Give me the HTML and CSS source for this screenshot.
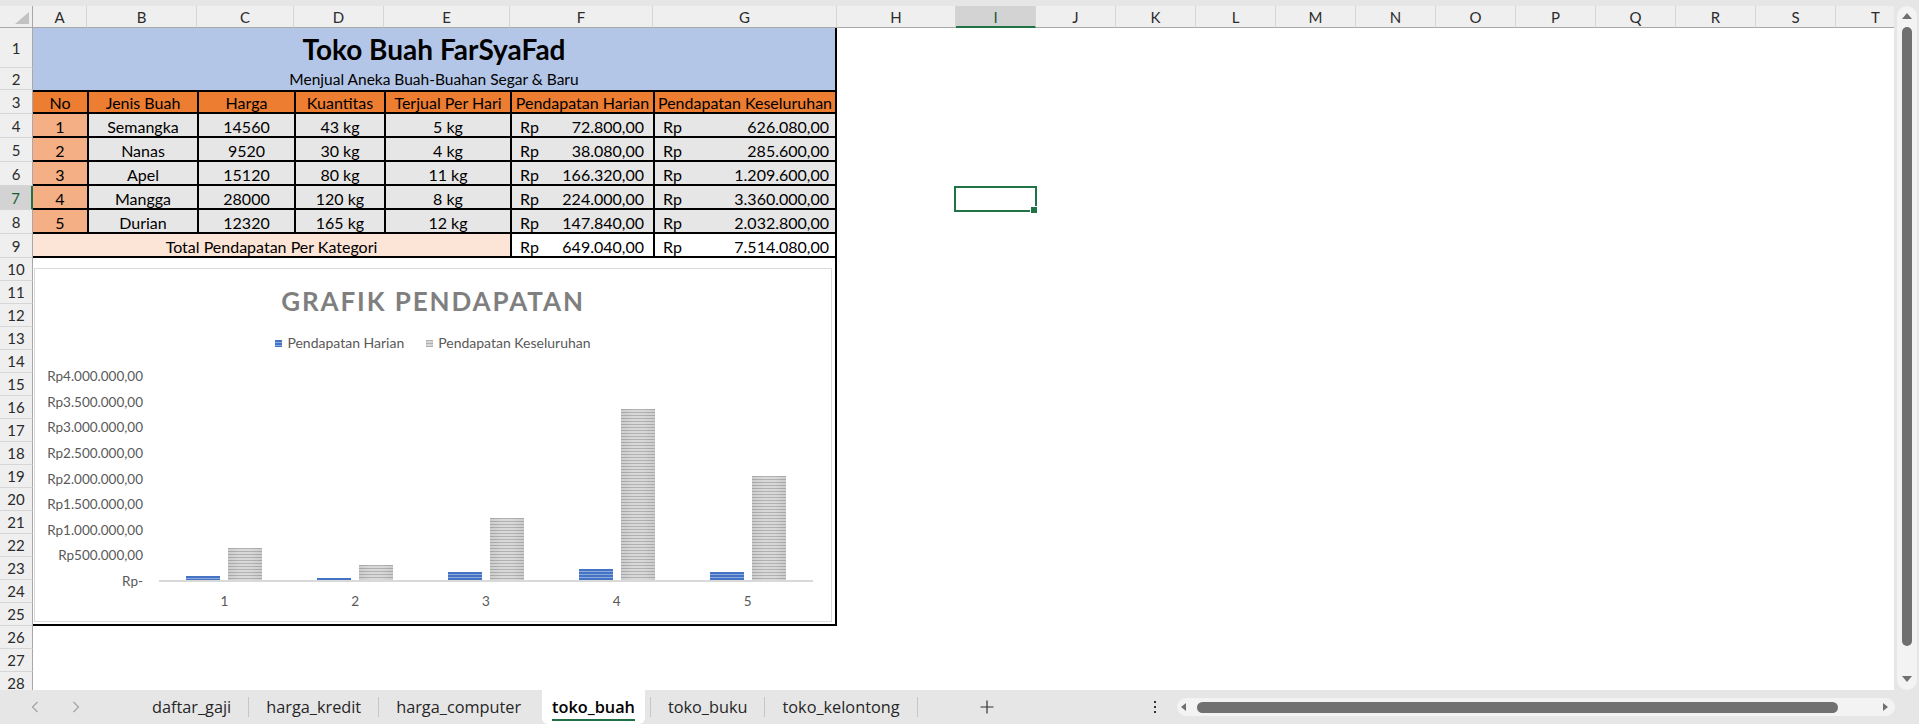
FILE: index.html
```html
<!DOCTYPE html>
<html lang="id">
<head>
<meta charset="utf-8">
<title>toko_buah</title>
<link rel="stylesheet" href="styles.css">
</head>
<body>
<div class="app">
  <div class="topstrip"></div>
  <div class="main">
    <div class="sheet">
      <div class="corner"><span class="tri"></span></div>
      <div class="ch">A</div><div class="ch">B</div><div class="ch">C</div><div class="ch">D</div><div class="ch">E</div><div class="ch">F</div><div class="ch">G</div><div class="ch">H</div><div class="ch on">I</div><div class="ch">J</div><div class="ch">K</div><div class="ch">L</div><div class="ch">M</div><div class="ch">N</div><div class="ch">O</div><div class="ch">P</div><div class="ch">Q</div><div class="ch">R</div><div class="ch">S</div><div class="ch">T</div>

      <div class="rh">1</div><div class="rh">2</div><div class="rh">3</div><div class="rh">4</div><div class="rh">5</div><div class="rh">6</div><div class="rh on">7</div><div class="rh">8</div><div class="rh">9</div><div class="rh">10</div><div class="rh">11</div><div class="rh">12</div><div class="rh">13</div><div class="rh">14</div><div class="rh">15</div><div class="rh">16</div><div class="rh">17</div><div class="rh">18</div><div class="rh">19</div><div class="rh">20</div><div class="rh">21</div><div class="rh">22</div><div class="rh">23</div><div class="rh">24</div><div class="rh">25</div><div class="rh">26</div><div class="rh">27</div><div class="rh">28</div>

      <div class="tbl">
        <div class="title">Toko Buah FarSyaFad</div>
        <div class="sub">Menjual Aneka Buah-Buahan Segar &amp; Baru</div>

        <div class="c hd first">No</div>
        <div class="c hd">Jenis Buah</div>
        <div class="c hd">Harga</div>
        <div class="c hd">Kuantitas</div>
        <div class="c hd">Terjual Per Hari</div>
        <div class="c hd">Pendapatan Harian</div>
        <div class="c hd">Pendapatan Keseluruhan</div>

        <div class="c no first">1</div><div class="c">Semangka</div><div class="c">14560</div><div class="c">43 kg</div><div class="c">5 kg</div><div class="c rp"><span>Rp</span><span>72.800,00</span></div><div class="c rp g"><span>Rp</span><span>626.080,00</span></div>
        <div class="c no first">2</div><div class="c">Nanas</div><div class="c">9520</div><div class="c">30 kg</div><div class="c">4 kg</div><div class="c rp"><span>Rp</span><span>38.080,00</span></div><div class="c rp g"><span>Rp</span><span>285.600,00</span></div>
        <div class="c no first">3</div><div class="c">Apel</div><div class="c">15120</div><div class="c">80 kg</div><div class="c">11 kg</div><div class="c rp"><span>Rp</span><span>166.320,00</span></div><div class="c rp g"><span>Rp</span><span>1.209.600,00</span></div>
        <div class="c no first">4</div><div class="c">Mangga</div><div class="c">28000</div><div class="c">120 kg</div><div class="c">8 kg</div><div class="c rp"><span>Rp</span><span>224.000,00</span></div><div class="c rp g"><span>Rp</span><span>3.360.000,00</span></div>
        <div class="c no first">5</div><div class="c">Durian</div><div class="c">12320</div><div class="c">165 kg</div><div class="c">12 kg</div><div class="c rp"><span>Rp</span><span>147.840,00</span></div><div class="c rp g"><span>Rp</span><span>2.032.800,00</span></div>

        <div class="c tot first">Total Pendapatan Per Kategori</div>
        <div class="c rp white"><span>Rp</span><span>649.040,00</span></div>
        <div class="c rp g white"><span>Rp</span><span>7.514.080,00</span></div>

        <div class="chartcell">
          <div class="chart">
            <div class="ctitle">GRAFIK PENDAPATAN</div>
            <div class="legend">
              <span class="lg"><i class="mk blue"></i>Pendapatan Harian</span>
              <span class="lg"><i class="mk gray"></i>Pendapatan Keseluruhan</span>
            </div>
            <div class="plotwrap">
              <div class="yaxis">
                <span>Rp4.000.000,00</span>
                <span>Rp3.500.000,00</span>
                <span>Rp3.000.000,00</span>
                <span>Rp2.500.000,00</span>
                <span>Rp2.000.000,00</span>
                <span>Rp1.500.000,00</span>
                <span>Rp1.000.000,00</span>
                <span>Rp500.000,00</span>
                <span>Rp-</span>
              </div>
              <div class="plotcol">
                <div class="plot">
                  <div class="cat"><i class="bar blue" style="height:1.82%"></i><i class="bar gray" style="height:15.652%"></i></div>
                  <div class="cat"><i class="bar blue" style="height:0.952%"></i><i class="bar gray" style="height:7.14%"></i></div>
                  <div class="cat"><i class="bar blue" style="height:4.158%"></i><i class="bar gray" style="height:30.24%"></i></div>
                  <div class="cat"><i class="bar blue" style="height:5.6%"></i><i class="bar gray" style="height:84%"></i></div>
                  <div class="cat"><i class="bar blue" style="height:3.696%"></i><i class="bar gray" style="height:50.82%"></i></div>
                </div>
                <div class="xaxis"><span>1</span><span>2</span><span>3</span><span>4</span><span>5</span></div>
              </div>
            </div>
          </div>
        </div>
      </div>

      <div class="selcell"><span class="handle"></span></div>
    </div>
    <div class="vscroll">
      <div class="vtrack">
        <span class="arr up"></span>
        <span class="vthumb"></span>
        <span class="arr down"></span>
      </div>
    </div>
  </div>
  <div class="tabbar">
    <div class="nav">
      <svg width="8" height="12" viewBox="0 0 8 12"><path d="M6.5 1 L1.5 6 L6.5 11" fill="none" stroke="#a3a3a3" stroke-width="1.2"/></svg>
      <svg width="8" height="12" viewBox="0 0 8 12"><path d="M1.5 1 L6.5 6 L1.5 11" fill="none" stroke="#a3a3a3" stroke-width="1.2"/></svg>
    </div>
    <div class="tabs">
      <span class="tab">daftar_gaji</span><i class="sep"></i>
      <span class="tab">harga_kredit</span><i class="sep"></i>
      <span class="tab">harga_computer</span>
      <span class="tab active">toko_buah</span><i class="sep"></i>
      <span class="tab">toko_buku</span><i class="sep"></i>
      <span class="tab">toko_kelontong</span><i class="sep"></i>
    </div>
    <span class="add"><svg width="14" height="14" viewBox="0 0 14 14"><path d="M7 0.5 V13.5 M0.5 7 H13.5" stroke="#333" stroke-width="1.2"/></svg></span>
    <span class="kebab"><svg width="4" height="14" viewBox="0 0 4 14"><rect x="1" y="1" width="2" height="2" fill="#333"/><rect x="1" y="6" width="2" height="2" fill="#333"/><rect x="1" y="11" width="2" height="2" fill="#333"/></svg></span>
    <div class="hscroll">
      <span class="harr left"></span>
      <span class="hthumb"></span>
      <span class="harr right"></span>
    </div>
  </div>
</div>
</body>
</html>
```

FILE: styles.css
```css
* { box-sizing: border-box; }
html, body { margin: 0; padding: 0; }
body {
  width: 1919px;
  height: 724px;
  overflow: hidden;
  background: #e6e6e6;
  font-family: Lato, "Noto Sans", sans-serif;
  color: #000;
}
.app { display: flex; flex-direction: column; height: 724px; }
.topstrip { height: 6px; flex: none; }
.main { display: flex; height: 684px; flex: none; }

/* ---------- sheet grid ---------- */
.sheet {
  flex: 1;
  min-width: 0;
  overflow: hidden;
  background: #fff;
  display: grid;
  grid-template-columns: 33px 54px 110px 97px 90px 126px 143px 184px 119px repeat(12, 80px);
  grid-template-rows: 22px 40px 22px repeat(7, 24px) repeat(19, 23px);
}
.corner {
  background: #efefef;
  border-right: 1px solid #a8a8a8;
  border-bottom: 1px solid #a8a8a8;
  display: flex;
  align-items: flex-end;
  justify-content: flex-end;
  padding: 0 3px 3px 0;
}
.tri {
  width: 14px;
  height: 12px;
  background: #c2c2c2;
  clip-path: polygon(100% 0, 100% 100%, 0 100%);
}
.ch {
  background: #efefef;
  border-right: 1px solid #d6d6d6;
  border-bottom: 1px solid #a8a8a8;
  display: flex;
  align-items: center;
  justify-content: center;
  font-size: 15px;
  color: #2b2b2b;
  padding-top: 1px;
}
.ch.on {
  background: #d3d3d3;
  border-bottom: 2px solid #217346;
  color: #185c37;
}
.rh {
  grid-column: 1;
  background: #efefef;
  border-right: 1px solid #a8a8a8;
  border-bottom: 1px solid #d6d6d6;
  display: flex;
  align-items: center;
  justify-content: center;
  font-size: 15px;
  color: #2b2b2b;
}
.rh.on {
  background: #d3d3d3;
  border-right: 2px solid #217346;
  color: #185c37;
}

/* ---------- table block ---------- */
.tbl {
  grid-column: 2 / 9;
  grid-row: 2 / 27;
  display: grid;
  grid-template-columns: 54px 110px 97px 90px 126px 143px 182px;
  grid-template-rows: 40px 22px repeat(7, 24px) repeat(16, 23px);
  border-right: 2px solid #000;
  font-size: 16px;
}
.title {
  grid-column: 1 / -1;
  background: #b4c6e7;
  font-weight: 700;
  font-size: 28px;
  display: flex;
  align-items: center;
  justify-content: center;
  padding-top: 1px;
}
.sub {
  grid-column: 1 / -1;
  background: #b4c6e7;
  display: flex;
  align-items: center;
  justify-content: center;
  font-size: 15.5px;
}
.c {
  display: flex;
  align-items: center;
  justify-content: center;
  background: #e7e6e6;
  border-left: 2px solid #000;
  border-bottom: 2px solid #000;
  white-space: nowrap;
  padding-top: 2px;
}
.c.first { border-left: 0; }
.c.hd { background: #ed7d31; border-top: 2px solid #000; padding-top: 0; }
.c.no { background: #f4b084; }
.c.rp { justify-content: space-between; padding-left: 8px; padding-right: 9px; }
.c.rp.g { padding-right: 6px; }
.c.tot { grid-column: 1 / 6; background: #fce4d6; }
.c.white { background: #fff; }

/* ---------- chart ---------- */
.chartcell {
  grid-column: 1 / -1;
  grid-row: 10 / 26;
  border-bottom: 2px solid #000;
  padding: 10px 3px 2px 1px;
  background: #fff;
}
.chart {
  height: 100%;
  border: 1px solid #d9d9d9;
  display: flex;
  flex-direction: column;
  align-items: stretch;
  color: #595959;
}
.ctitle {
  margin-top: 17px;
  height: 30px;
  line-height: 30px;
  text-align: center;
  font-weight: 700;
  font-size: 26px;
  letter-spacing: 1.9px;
  color: #7f7f7f;
}
.legend {
  margin-top: 19px;
  height: 16px;
  line-height: 16px;
  display: flex;
  justify-content: center;
  gap: 22px;
  font-size: 14px;
}
.lg { display: flex; align-items: center; }
.mk { display: inline-block; width: 7px; height: 7px; margin-right: 5px; }
.blue { background: repeating-linear-gradient(to bottom, #4472c4 0 2px, #8eaadc 2px 3px); }
.gray {
  background:
    linear-gradient(to right, rgba(0,0,0,0.06), rgba(255,255,255,0) 35%, rgba(255,255,255,0) 65%, rgba(0,0,0,0.06)),
    repeating-linear-gradient(to bottom, #b1b1b1 0 1px, #d9d9d9 1px 3px);
}
.plotwrap {
  margin-top: 18px;
  display: flex;
  align-items: flex-start;
}
.yaxis {
  width: 108px;
  height: 219px;
  display: flex;
  flex-direction: column;
  justify-content: space-between;
  align-items: flex-end;
  font-size: 13.5px;
  line-height: 14px;
}
.plotcol { margin-left: 16px; width: 654px; padding-top: 7px; }
.plot {
  height: 206px;
  border-bottom: 2px solid #d9d9d9;
  display: flex;
}
.cat {
  flex: 1;
  height: 100%;
  display: flex;
  align-items: flex-end;
  justify-content: center;
  gap: 8px;
}
.bar { display: block; width: 34px; }
.xaxis {
  margin-top: 11px;
  display: flex;
  font-size: 13.5px;
  line-height: 16px;
}
.xaxis span { flex: 1; text-align: center; }

/* ---------- selection ---------- */
.selcell {
  grid-column: 10;
  grid-row: 8;
  border: 2px solid #217346;
  margin: 0 -1px -2px -2px;
  position: relative;
}
.handle {
  position: absolute;
  right: -3px;
  bottom: -4px;
  width: 8px;
  height: 8px;
  background: #217346;
  border: 1px solid #fff;
}

/* ---------- vertical scrollbar ---------- */
.vscroll { width: 25px; flex: none; padding: 0 2px 0 3px; }
.vtrack {
  height: 100%;
  background: #f3f3f3;
  border-radius: 10px;
  display: flex;
  flex-direction: column;
  align-items: center;
  padding: 7px 0 8px;
}
.arr { width: 0; height: 0; border-left: 5px solid transparent; border-right: 5px solid transparent; }
.arr.up { border-bottom: 6px solid #707070; }
.arr.down { border-top: 6px solid #707070; }
.vthumb {
  flex: 1;
  width: 10px;
  background: #707070;
  border-radius: 5px;
  margin: 8px 0 30px;
}

/* ---------- tab bar ---------- */
.tabbar {
  height: 34px;
  flex: none;
  display: flex;
  align-items: center;
  font-family: "Open Sans", "Noto Sans", sans-serif;
}
.nav {
  width: 135px;
  flex: none;
  display: flex;
  align-items: center;
  padding-left: 31px;
  gap: 33px;
}
.nav svg { display: block; }
.tabs {
  width: 794px;
  flex: none;
  display: flex;
  align-items: center;
  height: 100%;
}
.tab {
  padding: 0 17px;
  font-size: 16.3px;
  color: #262626;
  height: 100%;
  display: flex;
  align-items: center;
  white-space: nowrap;
}
.tab.active {
  background: #fff;
  padding: 0 10px;
  margin: 0 5px 0 4px;
  font-weight: 600;
  color: #000;
  border-radius: 0 0 6px 6px;
  position: relative;
}
.tab.active::after {
  content: "";
  position: absolute;
  left: 10px;
  right: 10px;
  bottom: 3px;
  height: 2px;
  background: #1e7145;
}
.sep { display: block; width: 1px; height: 20px; background: #c6c6c6; flex: none; }
.add { display: flex; margin-left: 51px; width: 14px; }
.kebab { display: flex; margin-left: auto; margin-right: 20px; }
.hscroll {
  width: 718px;
  height: 18px;
  margin-right: 24px;
  background: #f3f3f3;
  border-radius: 9px;
  display: flex;
  align-items: center;
  padding: 0 7px 0 4px;
  flex: none;
}
.harr { width: 0; height: 0; border-top: 4px solid transparent; border-bottom: 4px solid transparent; }
.harr.left { border-right: 5px solid #707070; }
.harr.right { border-left: 5px solid #707070; margin-left: 45px; }
.hthumb { flex: 1; height: 11px; background: #707070; border-radius: 6px; margin-left: 11px; }
```
